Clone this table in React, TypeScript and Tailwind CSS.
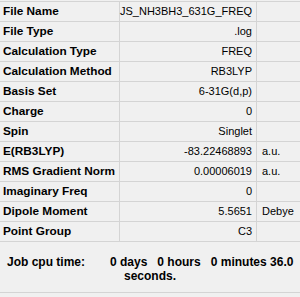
const rows: { label: string; value: string; unit?: string }[] = [
  { label: 'File Name', value: 'JS_NH3BH3_631G_FREQ' },
  { label: 'File Type', value: '.log' },
  { label: 'Calculation Type', value: 'FREQ' },
  { label: 'Calculation Method', value: 'RB3LYP' },
  { label: 'Basis Set', value: '6-31G(d,p)' },
  { label: 'Charge', value: '0' },
  { label: 'Spin', value: 'Singlet' },
  { label: 'E(RB3LYP)', value: '-83.22468893', unit: 'a.u.' },
  { label: 'RMS Gradient Norm', value: '0.00006019', unit: 'a.u.' },
  { label: 'Imaginary Freq', value: '0' },
  { label: 'Dipole Moment', value: '5.5651', unit: 'Debye' },
  { label: 'Point Group', value: 'C3' },
]

export default function App() {
  return (
    <div className="w-[300px] h-[297px] bg-[#f0f0f0] text-black text-[11px] font-['Liberation_Sans',Arial,sans-serif] overflow-hidden">
      <div className="pt-px">
        <div className="grid grid-cols-[120px_137px_43px] border-t border-[#d4d4d4]">
          {rows.map(r => (
            <div key={r.label} className="contents">
              <div className="h-5 border-b border-r border-[#d4d4d4] pl-[3px] font-bold text-[11.8px] leading-[19px] whitespace-nowrap">{r.label}</div>
              <div className="h-5 border-b border-r border-[#d4d4d4] pr-[4px] text-right leading-[19px] whitespace-nowrap">{r.value}</div>
              <div className="h-5 border-b border-[#d4d4d4] pl-[5px] leading-[19px] whitespace-nowrap">{r.unit ?? ''}</div>
            </div>
          ))}
        </div>
      </div>
      <div className="h-[51px] border-b border-[#d4d4d4] flex pt-[13px] font-bold text-[12px] leading-[14px]">
        <div className="w-[110px] pl-[7px]">Job cpu time:</div>
        <div className="whitespace-pre">
          <div>{'0 days   0 hours   0 minutes 36.0'}</div>
          <div className="pl-[14px]">seconds.</div>
        </div>
      </div>
    </div>
  )
}
